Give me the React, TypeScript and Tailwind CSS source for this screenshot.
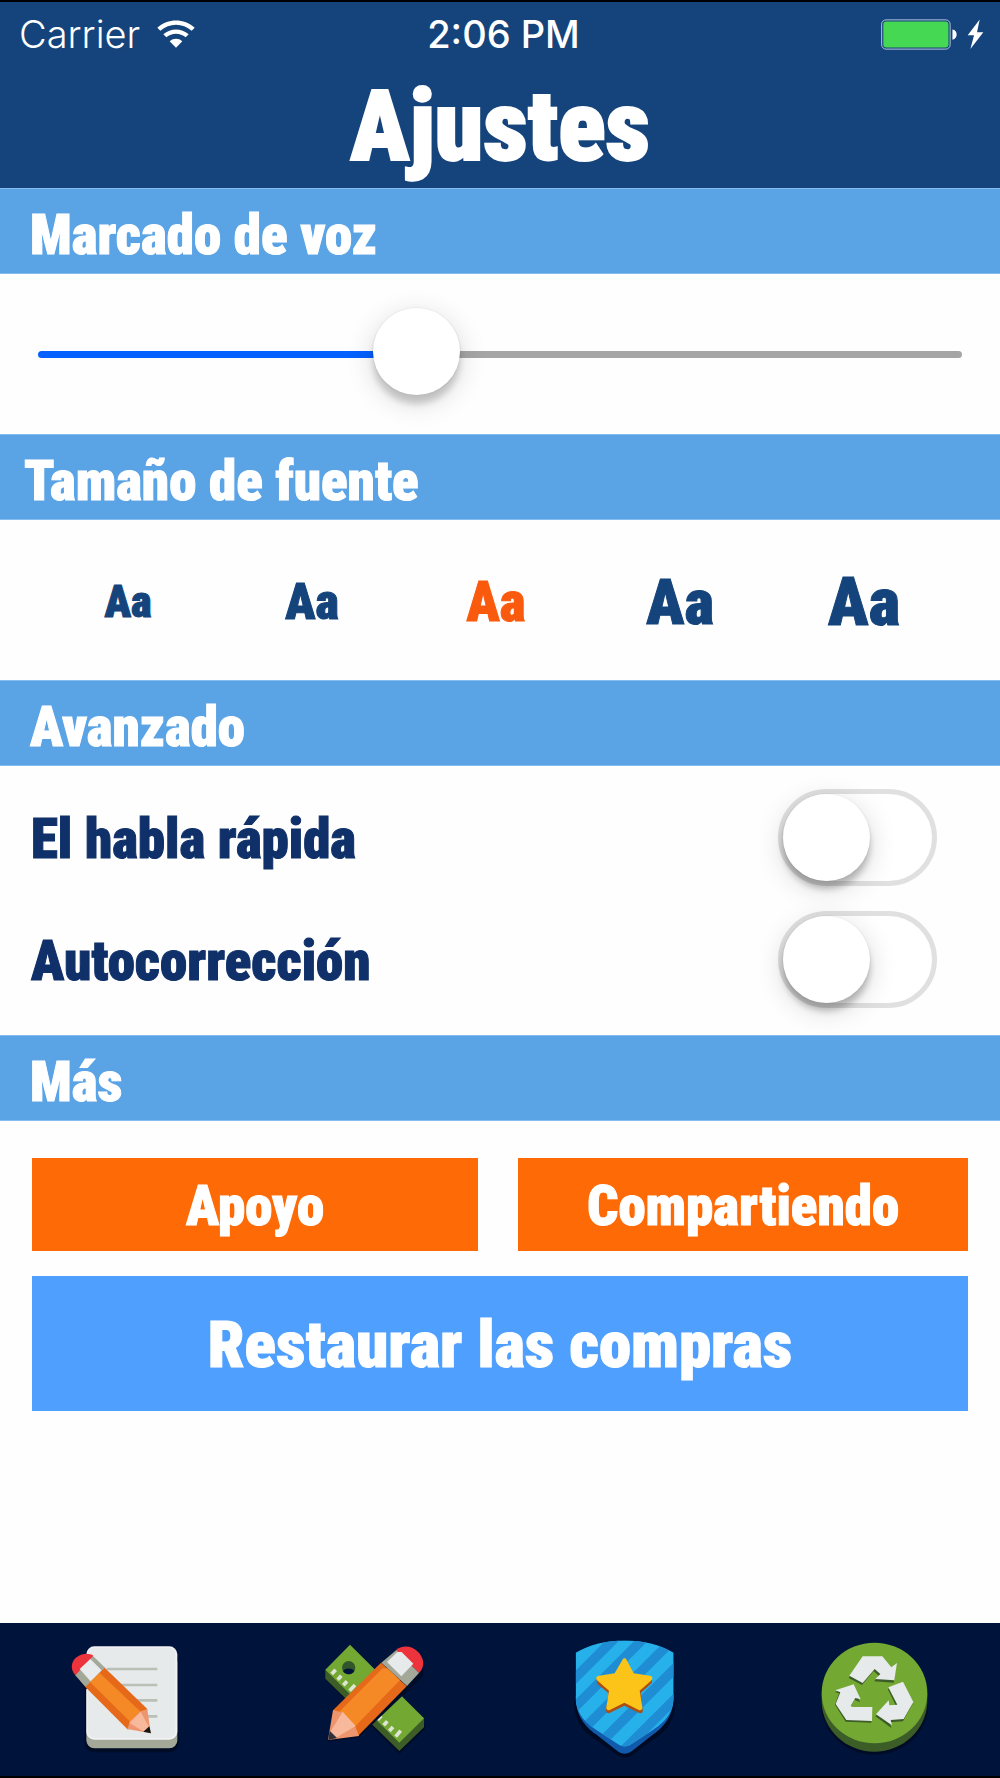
import { useState } from "react";
import type { CSSProperties, ReactNode } from "react";

function WifiIcon() {
  return (
    <svg viewBox="0 0 114 84" className="h-7 w-[38px]" fill="#fff" aria-hidden="true">
      <path d="M1 23C33-6 81-6 113 23l-9 9C77 8 37 8 10 32z" />
      <path d="M19 43c22-19 54-19 76 0l-9 9c-17-14-41-14-58 0z" />
      <path d="M38 64c11-10 27-10 38 0L57 83z" />
    </svg>
  );
}

function BatteryIcon() {
  return (
    <svg viewBox="0 0 310 92" className="h-[31px] w-[103px]" aria-hidden="true">
      <rect x="2" y="2" width="206" height="88" rx="13" fill="none" stroke="#b4c4dd" strokeWidth="3" />
      <rect x="7" y="7" width="196" height="78" rx="9" fill="#45d853" />
      <path d="M215 31c17 2 17 28 0 31z" fill="#fff" />
      <path d="M297 1l-36 47h19l-11 42 39-51h-19z" fill="#fff" />
    </svg>
  );
}

function NoteIcon() {
  return (
    <svg viewBox="0 40 450 459" className="h-[153px] w-[150px]" aria-hidden="true">
      <rect x="104" y="124" width="282" height="304" rx="28" fill="#000b25" />
      <rect x="109" y="134" width="273" height="282" rx="24" fill="#a3a899" />
      <rect x="109" y="110" width="273" height="280" rx="24" fill="#f0f2f5" />
      <rect x="113" y="114" width="263" height="271" rx="20" fill="#e6eaeb" />
      <path d="M170 178h152M210 226h112M260 272h62M290 320h32" stroke="#bbc0b7" strokeWidth="8" />
      <path d="M76 196l30 44 8-6-4-50z" fill="#010d2a" />
      <path d="M126 136l40 39-59 58-32-37z" fill="#a3a899" />
      <path d="M76 197c-17-20-12-44 5-55 17-13 39-11 49-4z" fill="#ed333b" />
      <path d="M121 148l34 34-32 34-34-38z" fill="#e8ebed" />
      <path d="M164 174l128 124-58 62L106 232z" fill="#e56919" />
      <path d="M149 190l128 121-29 33L120 217z" fill="#f48925" />
      <path d="M292 298l10 73-70-13 8-23 32-30z" fill="#ed956c" />
      <path d="M272 306l25 47-15 13-44-26z" fill="#f8b89b" />
      <path d="M298 350l5 21-23-5z" fill="#151719" />
    </svg>
  );
}

function ToolsIcon() {
  return (
    <svg viewBox="0 40 450 459" className="h-[153px] w-[150px]" aria-hidden="true">
      <path d="M76 210l222 224 76-75v-14L150 112z" fill="#000b25" />
      <path d="M76 180v27l222 217 74-71v-27z" fill="#3d5d28" />
      <path d="M150 105L76 180l222 219 74-73z" fill="#73a932" />
      <ellipse cx="146" cy="174" rx="20" ry="20" fill="#33552a" />
      <path d="M129 184c7-10 27-10 34 0-6 12-26 13-34 0z" fill="#00133b" />
      <path
        d="M95 193l12-13M113 210l11-12M130 227l11-12M149 243l16-17M233 330l11-12M251 347l11-12M268 364l11-12M287 381l15-18"
        stroke="#dfe5d5"
        strokeWidth="11"
      />
      <path d="M83 396l94-13 193-184v-22L174 358l-88 30z" fill="#010c28" />
      <path d="M288 121c38-27 76 5 81 33 2 16-3 27-12 36z" fill="#ed333b" />
      <path d="M289 121l68 69-36 39-77-70z" fill="#a3a899" />
      <path d="M305 127l35 35-36 38-43-43 31-30z" fill="#e6eaeb" />
      <path d="M243 159l77 71-146 149-75-77z" fill="#e56919" />
      <path d="M262 176l38 35-139 144-44-48 131-131z" fill="#f48925" />
      <path d="M99 301l-15 90 93-12-12-31-35-39z" fill="#ed956c" />
      <path d="M128 306l39 43-59 35-17-17z" fill="#f8b89b" />
      <path d="M89 363l22 22-26 6z" fill="#303139" />
    </svg>
  );
}

function ShieldIcon() {
  return (
    <svg viewBox="0 40 450 459" className="h-[153px] w-[150px]" aria-hidden="true">
      <defs>
        <clipPath id="shield-face">
          <path d="M77 129c80-49 214-49 294 0v129c0 54-29 80-61 102l-64 42c-16 11-28 11-44 0l-64-42c-32-22-61-48-61-102z" />
        </clipPath>
      </defs>
      <path d="M72 276c2 62 30 90 64 113l66 47c16 11 29 11 44 0l66-47c34-23 62-51 64-113z" fill="#000a23" />
      <path d="M77 258c0 62 29 92 61 116l64 50c16 11 28 11 44 0l64-50c32-24 61-54 61-116z" fill="#1159aa" />
      <g clipPath="url(#shield-face)">
        <path d="M70 80h310v340H70z" fill="#27b1eb" />
        <path
          d="M60 220L210 70M60 307L300 67M105 354L380 79M140 411L400 151M205 438L400 243"
          stroke="#1f8dd3"
          strokeWidth="29"
        />
      </g>
      <path d="M139 207l3 16 34 28-8 50c0 8 5 12 12 8l43-21 43 21c8 4 14-1 12-8l-6-51 34-31v-14z" fill="#ad4f10" />
      <path
        d="M217 151c3-7 10-7 13 0l21 40 48 7c9 2 11 9 4 15l-34 30 8 50c0 7-5 11-12 7l-42-21-42 21c-7 4-13 0-12-7l8-50-34-30c-7-6-5-13 4-15l47-7z"
        fill="#fcc419"
      />
    </svg>
  );
}

function RecycleIcon() {
  return (
    <svg viewBox="0 40 450 459" className="h-[153px] w-[150px]" aria-hidden="true">
      <ellipse cx="224" cy="285" rx="160" ry="150" fill="#000b25" />
      <path d="M65 250v30c4 81 73 146 158 146s155-65 159-146v-30z" fill="#3d5d28" />
      <ellipse cx="223.500" cy="250" rx="158.500" ry="151" fill="#73a932" />
      <g fill="#3d5d28" transform="translate(-2 5)">
        <path d="M188 140h59l27 35 17-13-8 52-59-4 15-16-16-15-35 42-40-21z" />
        <path d="M265 233l44-17 31 61-29 53-39 3 4 17-48-35 38-42 2 17 24-2z" />
        <path d="M106 242l55-18 21 49-17-8-13 24 5 6 60-3-1 42-77-3-32-51 12-34z" />
      </g>
      <g fill="#e6eaeb">
        <path d="M188 140h59l27 33 17-13-8 52-57-4 15-15-17-15-36 42-40-22z" />
        <path d="M265 233l44-17 31 61-29 51-39 3 4 16-48-33 38-42 2 15 24-2z" />
        <path d="M106 242l55-18 21 45-16-4-14 24 5 3h60l-1 42-77-3-32-48 14-35z" />
      </g>
    </svg>
  );
}

function SectionBand({ id, children, indent = "pl-[30px]" }: { id: string; children: ReactNode; indent?: string }) {
  return (
    <h2
      id={id}
      className={`flex h-[86px] items-center border-y border-[#86bdf0] bg-[#5aa3e4] pt-2 pr-7 text-[55px] leading-none font-black text-white [-webkit-text-stroke:1px_currentColor] ${indent}`}
    >
      {children}
    </h2>
  );
}

function VoiceSlider() {
  const [value, setValue] = useState(40);
  const fill = { "--fill": `${value}%` } as CSSProperties;
  return (
    <input
      type="range"
      min={0}
      max={100}
      value={value}
      onChange={(e) => setValue(Number(e.target.value))}
      aria-labelledby="voz"
      style={fill}
      className="block h-[87px] w-full cursor-pointer appearance-none bg-transparent [&::-webkit-slider-runnable-track]:h-[7px] [&::-webkit-slider-runnable-track]:rounded-full [&::-webkit-slider-runnable-track]:bg-[linear-gradient(to_right,#0561ff_var(--fill),#a5a5a5_var(--fill))] [&::-webkit-slider-thumb]:-mt-[43px] [&::-webkit-slider-thumb]:size-[87px] [&::-webkit-slider-thumb]:appearance-none [&::-webkit-slider-thumb]:rounded-full [&::-webkit-slider-thumb]:bg-white [&::-webkit-slider-thumb]:shadow-[0_0_1px_1px_rgba(0,0,0,0.04),0_9px_6px_rgba(0,0,0,0.16),0_7px_28px_rgba(0,0,0,0.16)]"
    />
  );
}

function ToggleRow({ id, label }: { id: string; label: string }) {
  return (
    <div className="flex items-center justify-between">
      <label
        htmlFor={id}
        className="pt-1 text-[55px] leading-none font-black text-[#0f3069] [-webkit-text-stroke:1px_currentColor]"
      >
        {label}
      </label>
      <input
        id={id}
        type="checkbox"
        role="switch"
        className="h-[97px] w-[159px] shrink-0 cursor-pointer appearance-none rounded-full border-[5px] border-[#e0e0e0] bg-white before:block before:size-[87px] before:rounded-full before:bg-white before:shadow-[0_0_1px_1px_rgba(0,0,0,0.03),0_8px_6px_rgba(0,0,0,0.22),0_7px_28px_rgba(0,0,0,0.16)] checked:border-[#45d853] checked:bg-[#45d853] checked:before:translate-x-[62px]"
      />
    </div>
  );
}

const sizes = [
  { name: "Muy pequeño", cls: "text-[44px]" },
  { name: "Pequeño", cls: "text-[50px]" },
  { name: "Mediano", cls: "text-[55px]" },
  { name: "Grande", cls: "text-[63px]" },
  { name: "Muy grande", cls: "text-[67px]" },
];

const tabs = [
  { name: "Notas", icon: <NoteIcon /> },
  { name: "Herramientas", icon: <ToolsIcon /> },
  { name: "Logros", icon: <ShieldIcon /> },
  { name: "Reciclar", icon: <RecycleIcon /> },
];

export default function App() {
  const [size, setSize] = useState(2);
  return (
    <div className="flex min-h-screen flex-col border-y-2 border-black bg-[#fefefe] font-['Roboto_Condensed','Roboto',sans-serif]">
      <header className="bg-[#14447b] text-white">
        <div className="grid h-16 grid-cols-[1fr_auto_1fr] items-center pr-[16px] pl-[19px] font-['Inter',sans-serif] text-[38px] leading-none">
          <div className="flex items-center gap-[17px]">
            <span className="font-light">Carrier</span>
            <WifiIcon />
          </div>
          <span className="pl-1 font-medium">2:06 PM</span>
          <div className="flex justify-end">
            <BatteryIcon />
          </div>
        </div>
        <h1 className="flex h-[122px] items-center justify-center text-[98px] leading-none font-black [-webkit-text-stroke:2px_currentColor]">
          Ajustes
        </h1>
      </header>

      <main className="flex flex-col">
        <section aria-labelledby="voz">
          <SectionBand id="voz">Marcado de voz</SectionBand>
          <div className="px-[38px] pt-[37px] pb-9">
            <VoiceSlider />
          </div>
        </section>

        <section aria-labelledby="fuente">
          <SectionBand id="fuente" indent="pl-6">
            Tamaño de fuente
          </SectionBand>
          <div className="grid h-40 grid-cols-5 items-center pt-1 pr-11 pl-9">
            {sizes.map((s, i) => (
              <button
                key={s.name}
                type="button"
                title={s.name}
                aria-pressed={size === i}
                onClick={() => setSize(i)}
                className={`cursor-pointer leading-none font-black [-webkit-text-stroke:1px_currentColor] ${s.cls} ${size === i ? "text-[#fa5a0d]" : "text-[#14447b]"}`}
              >
                Aa
              </button>
            ))}
          </div>
        </section>

        <section aria-labelledby="avanzado">
          <SectionBand id="avanzado">Avanzado</SectionBand>
          <div className="flex flex-col gap-[25px] pt-[23px] pr-[63px] pb-[27px] pl-[31px]">
            <ToggleRow id="habla" label="El habla rápida" />
            <ToggleRow id="autocorreccion" label="Autocorrección" />
          </div>
        </section>

        <section aria-labelledby="mas">
          <SectionBand id="mas">Más</SectionBand>
          <div className="grid grid-cols-[446fr_450fr] gap-x-10 gap-y-[25px] px-8 pt-[37px] pb-10 font-black text-white [-webkit-text-stroke:1px_currentColor]">
            <button type="button" className="h-[93px] cursor-pointer bg-[#fe6b06] pt-1 text-[55px] leading-none">
              Apoyo
            </button>
            <button type="button" className="h-[93px] cursor-pointer bg-[#fe6b06] pt-1 text-[55px] leading-none">
              Compartiendo
            </button>
            <button type="button" className="col-span-2 h-[135px] cursor-pointer bg-[#4f9fff] pt-1 text-[65px] leading-none">
              Restaurar las compras
            </button>
          </div>
        </section>
      </main>

      <nav className="mt-auto grid grid-cols-4 bg-[#00133b]">
        {tabs.map((t) => (
          <button key={t.name} type="button" aria-label={t.name} className="flex cursor-pointer justify-center">
            {t.icon}
          </button>
        ))}
      </nav>
    </div>
  );
}
